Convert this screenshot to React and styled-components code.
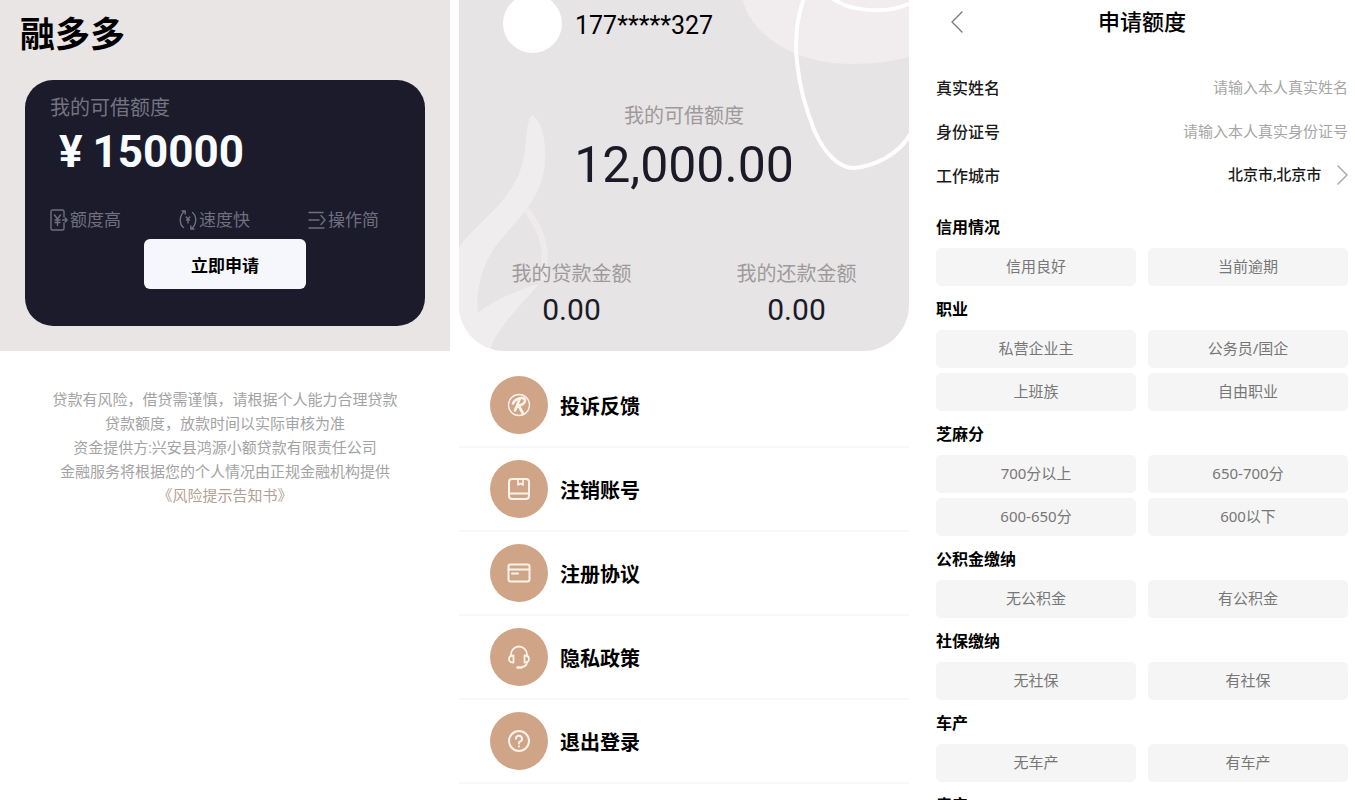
import React, { useState } from 'react';
import styled, { createGlobalStyle } from 'styled-components';

const GlobalStyle = createGlobalStyle`
  * {
    box-sizing: border-box;
  }

  body {
    margin: 0;
    background: #fff;
    color: #000;
    font-family: Roboto, 'Noto Sans CJK SC', sans-serif;
  }

  button, input, select {
    font-family: inherit;
  }
`;

const Screens = styled.div`
  display: grid;
  grid-template-columns: 450fr 450fr 437fr;
  gap: 9px;
  height: 100vh;
`;

const Screen = styled.section`
  min-width: 0;
  overflow-y: auto;
  scrollbar-width: none;
`;

/* home */

const HomeHero = styled.div`
  background: #e9e5e5;
  padding: 10px 25px 25px;
`;

const Brand = styled.h1`
  margin: 0 0 18px -5px;
  font-size: 35px;
  line-height: 52px;
  font-weight: 700;
`;

const QuotaCard = styled.div`
  display: flex;
  flex-direction: column;
  background: #1b1b2b;
  border-radius: 28px;
  padding: 15px 25px 37px;
`;

const QuotaLabel = styled.span`
  font-size: 20px;
  line-height: 26px;
  color: #747380;
`;

const QuotaAmount = styled.strong`
  display: flex;
  gap: 10px;
  padding-left: 9px;
  font-size: 44px;
  line-height: 62px;
  color: #f8fbff;
`;

const Features = styled.ul`
  display: grid;
  grid-template-columns: repeat(3, 129px);
  margin: 24px 0 6px;
  padding: 0;
  list-style: none;
`;

const Feature = styled.li`
  display: flex;
  align-items: center;
  gap: 2px;
  font-size: 17px;
  line-height: 26px;
  color: #706f7d;
`;

const ApplyButton = styled.button`
  align-self: center;
  width: 162px;
  height: 50px;
  border: none;
  border-radius: 6px;
  background: #f5f7fc;
  color: #000;
  font-size: 17px;
  font-weight: 700;
  cursor: pointer;
`;

const Notice = styled.div`
  padding-top: 37px;
  text-align: center;
  font-size: 15px;
  line-height: 24px;
  color: #a3a3a3;

  p {
    margin: 0;
  }
`;

const NoticeLink = styled.a`
  color: #b59f92;
  text-decoration: none;
`;

/* profile */

const ProfileHero = styled.div`
  position: relative;
  overflow: hidden;
  height: 351px;
  background: #e7e4e5;
  border-radius: 0 0 46px 46px;
`;

const HeroArt = styled.svg`
  position: absolute;
  inset: 0;
  width: 100%;
  height: 100%;
`;

const HeroBody = styled.div`
  position: relative;
  text-align: center;
`;

const UserRow = styled.div`
  display: flex;
  align-items: center;
  gap: 13px;
  height: 46px;
  padding-left: 44px;
  font-size: 25px;
`;

const Avatar = styled.div`
  flex: none;
  width: 59px;
  height: 59px;
  border-radius: 50%;
  background: #fff;
`;

const Phone = styled.span`
  padding-top: 5px;
`;

const Caption = styled.div`
  font-size: 20px;
  line-height: 30px;
  color: #9e9a9b;
`;

const Balance = styled.div`
  padding-top: 55px;
`;

const BalanceValue = styled.div`
  font-size: 50px;
  line-height: 68px;
  color: #1b1b27;
`;

const Stats = styled.div`
  display: grid;
  grid-template-columns: 1fr 1fr;
  padding-top: 60px;
`;

const StatValue = styled.div`
  font-size: 30px;
  line-height: 42px;
  color: #1b1b27;
`;

const Menu = styled.nav`
  padding-top: 13px;
`;

const MenuItem = styled.a`
  display: flex;
  align-items: center;
  gap: 12px;
  height: 84px;
  padding-left: 31px;
  border-bottom: 2px solid #f8f8f8;
  color: #000;
  font-size: 20px;
  font-weight: 700;
  text-decoration: none;
`;

const MenuIcon = styled.span`
  display: flex;
  align-items: center;
  justify-content: center;
  width: 58px;
  height: 58px;
  border-radius: 50%;
  background: #cfa487;
  color: #fdf3ea;
`;

/* application form */

const Form = styled.form`
  padding: 0 7px 0 18px;
`;

const FormHeader = styled.header`
  display: grid;
  grid-template-columns: 44px 1fr 44px;
  align-items: center;
  height: 44px;
  margin-bottom: 21px;
`;

const BackButton = styled.button`
  display: flex;
  padding: 0 0 0 14px;
  border: none;
  background: none;
  color: #777;
  cursor: pointer;
`;

const FormTitle = styled.h2`
  margin: 0;
  padding-top: 2px;
  font-size: 22px;
  line-height: 32px;
  font-weight: 500;
  text-align: center;
`;

const Field = styled.label`
  display: flex;
  align-items: center;
  justify-content: space-between;
  height: 44px;
  font-size: 16px;
  font-weight: 500;
  color: #1a1a1a;
`;

const FieldInput = styled.input`
  flex: 1;
  min-width: 0;
  padding: 2px 0 0;
  border: none;
  outline: none;
  background: none;
  font-size: 15px;
  text-align: right;

  &::placeholder {
    color: #a6a6a6;
  }
`;

const CityPicker = styled.span`
  display: flex;
  align-items: center;
  gap: 15px;
  color: #a9aab5;
`;

const CitySelect = styled.select`
  appearance: none;
  padding: 0;
  border: none;
  outline: none;
  background: none;
  color: #1a1a1a;
  font-size: 15px;
  font-weight: 500;
`;

const Group = styled.fieldset`
  min-width: 0;
  margin: 0 0 11px;
  padding: 0;
  border: none;
`;

const GroupTitle = styled.legend`
  margin-bottom: 8px;
  padding: 0;
  font-size: 16px;
  line-height: 25px;
  font-weight: 700;
`;

const Options = styled.div`
  display: grid;
  grid-template-columns: 1fr 1fr;
  gap: 5px 12px;
`;

const Option = styled.button`
  height: 38px;
  padding: 0 0 4px;
  border: none;
  border-radius: 5px;
  background: ${(props) => (props.$active ? '#ecdccf' : '#f5f5f5')};
  color: #777;
  font-family: 'Noto Sans', 'Noto Sans CJK SC', sans-serif;
  font-size: 15px;
  cursor: pointer;
`;

const Groups = styled.div`
  padding-top: 18px;
`;

const LineIcon = ({ width, height, stroke = 2, children }) => (
  <svg
    width={width}
    height={height}
    viewBox={`0 0 ${width} ${height}`}
    fill="none"
    stroke="currentColor"
    strokeWidth={stroke}
    strokeLinecap="round"
    strokeLinejoin="round"
    aria-hidden="true"
  >
    {children}
  </svg>
);

const features = [
  {
    text: '额度高',
    icon: (
      <LineIcon width={18} height={22} stroke={1.4}>
        <path d="M14 8V2.500Q14 1 12.500 1H2.500Q1 1 1 2.500V19.500Q1 21 2.500 21H12.500Q14 21 14 19.500V14" />
        <path d="M4.500 6L7.500 10L10.500 6M7.500 10V16.500M5 11H10M5 13.500H10M12.500 11H17M15.200 9L17.200 11L15.200 13" />
      </LineIcon>
    ),
  },
  {
    text: '速度快',
    icon: (
      <LineIcon width={18} height={22} stroke={1.4}>
        <path d="M6 2C0 6 0 15 4.500 18.500M3 2H6.200V5M12 20C18 16 18 7 13.500 3.500M15 20H11.800V17" />
        <path d="M7.200 8L9 10L10.800 8M9 10V14M7.500 11H10.500" />
      </LineIcon>
    ),
  },
  {
    text: '操作简',
    icon: (
      <LineIcon width={18} height={22} stroke={1.4}>
        <path d="M1 3.500H15M1 11H11M1 19H16M13 6.500L17 11L13 15.500" />
      </LineIcon>
    ),
  },
];

const menu = [
  {
    text: '投诉反馈',
    icon: (
      <LineIcon width={24} height={24} stroke={1.3}>
        <circle cx="12" cy="12" r="10.500" />
        <path strokeWidth="2.600" d="M12.500 6.500L8 17.500M6 10.500C8 5 18 3 18 7.500C18 10.500 14 12.500 11.500 12.500L16 20.500" />
      </LineIcon>
    ),
  },
  {
    text: '注销账号',
    icon: (
      <LineIcon width={24} height={24}>
        <rect x="2" y="2" width="20" height="20" rx="3" />
        <path d="M2 16.500H22" />
        <path strokeWidth="1.600" d="M11 2V8L13.500 6.500L16 8V2" />
      </LineIcon>
    ),
  },
  {
    text: '注册协议',
    icon: (
      <LineIcon width={24} height={24}>
        <rect x="1.500" y="3.500" width="21" height="17" rx="2" />
        <path d="M1.500 8.500H22.500M5 12.500H11" />
      </LineIcon>
    ),
  },
  {
    text: '隐私政策',
    icon: (
      <LineIcon width={24} height={24} stroke={1.800}>
        <path d="M4 11V9.500A8 8 0 0 1 20 9.500V11M20 17C20 20 18 21.500 15 22" />
        <path d="M6.500 10.500V17.500C3.500 17.500 2 16 2 14S3.500 10.500 6.500 10.500ZM17.500 10.500V17.500C20.500 17.500 22 16 22 14S20.500 10.500 17.500 10.500Z" />
        <path strokeWidth="2.500" d="M10.500 22.500H14.500" />
      </LineIcon>
    ),
  },
  {
    text: '退出登录',
    icon: (
      <LineIcon width={24} height={24}>
        <circle cx="12" cy="12" r="10" />
        <path d="M9 9.800A3 3 0 1 1 13 12.500Q12 13 12 14.500M12 17.300V17.500" />
      </LineIcon>
    ),
  },
];

const groups = [
  { title: '信用情况', options: ['信用良好', '当前逾期'] },
  { title: '职业', options: ['私营企业主', '公务员/国企', '上班族', '自由职业'] },
  { title: '芝麻分', options: ['700分以上', '650-700分', '600-650分', '600以下'] },
  { title: '公积金缴纳', options: ['无公积金', '有公积金'] },
  { title: '社保缴纳', options: ['无社保', '有社保'] },
  { title: '车产', options: ['无车产', '有车产'] },
  { title: '房产', options: ['无房产', '有房产'] },
];

const Home = () => (
  <Screen>
    <HomeHero>
      <Brand>融多多</Brand>
      <QuotaCard>
        <QuotaLabel>我的可借额度</QuotaLabel>
        <QuotaAmount>
          <span>¥</span>
          <span>150000</span>
        </QuotaAmount>
        <Features>
          {features.map((item) => (
            <Feature key={item.text}>
              {item.icon}
              {item.text}
            </Feature>
          ))}
        </Features>
        <ApplyButton type="button">立即申请</ApplyButton>
      </QuotaCard>
    </HomeHero>
    <Notice>
      <p>贷款有风险，借贷需谨慎，请根据个人能力合理贷款</p>
      <p>贷款额度，放款时间以实际审核为准</p>
      <p>资金提供方:兴安县鸿源小额贷款有限责任公司</p>
      <p>金融服务将根据您的个人情况由正规金融机构提供</p>
      <NoticeLink href="#risk">《风险提示告知书》</NoticeLink>
    </Notice>
  </Screen>
);

const Profile = () => (
  <Screen>
    <ProfileHero>
      <HeroArt viewBox="0 0 450 351" preserveAspectRatio="none" aria-hidden="true">
        <path fill="#f1edee" d="M284 0C290 30 330 64 392 64C415 64 435 61 450 57V0Z" />
        <path
          fill="#f0edee"
          d="M73 115C65 124 69 150 62 168C51 203 18 222 0 247V351H31C36 330 62 305 80 284C60 290 38 298 19 313C16 290 24 262 39 243C54 225 76 205 84 176C89 155 86 122 73 115Z"
        />
        <path fill="none" stroke="#efebed" strokeWidth="6" d="M67 210C81 226 91 250 83 280" />
        <g fill="none" stroke="#fff" strokeWidth="4">
          <path d="M345 -2C330 38 338 88 356 132C366 154 380 168 395 168C415 166 440 155 452 133" />
          <path d="M373 -2C388 10 425 16 452 3" />
        </g>
      </HeroArt>
      <HeroBody>
        <UserRow>
          <Avatar />
          <Phone>177*****327</Phone>
        </UserRow>
        <Balance>
          <Caption>我的可借额度</Caption>
          <BalanceValue>12,000.00</BalanceValue>
        </Balance>
        <Stats>
          <div>
            <Caption>我的贷款金额</Caption>
            <StatValue>0.00</StatValue>
          </div>
          <div>
            <Caption>我的还款金额</Caption>
            <StatValue>0.00</StatValue>
          </div>
        </Stats>
      </HeroBody>
    </ProfileHero>
    <Menu>
      {menu.map((item) => (
        <MenuItem key={item.text} href="#menu">
          <MenuIcon>{item.icon}</MenuIcon>
          {item.text}
        </MenuItem>
      ))}
    </Menu>
  </Screen>
);

const Apply = () => {
  const [selected, setSelected] = useState({});

  return (
    <Screen>
      <Form>
        <FormHeader>
          <BackButton type="button" aria-label="返回">
            <LineIcon width={14} height={24} stroke={1.3}>
              <path d="M12 2L2 12L12 22" />
            </LineIcon>
          </BackButton>
          <FormTitle>申请额度</FormTitle>
        </FormHeader>
        <Field>
          真实姓名
          <FieldInput type="text" placeholder="请输入本人真实姓名" />
        </Field>
        <Field>
          身份证号
          <FieldInput type="text" placeholder="请输入本人真实身份证号" />
        </Field>
        <Field>
          工作城市
          <CityPicker>
            <CitySelect>
              <option>北京市,北京市</option>
            </CitySelect>
            <LineIcon width={11} height={20} stroke={1.5}>
              <path d="M1 1L10 10L1 19" />
            </LineIcon>
          </CityPicker>
        </Field>
        <Groups>
          {groups.map((group) => (
            <Group key={group.title}>
              <GroupTitle>{group.title}</GroupTitle>
              <Options>
                {group.options.map((option) => (
                  <Option
                    key={option}
                    type="button"
                    $active={selected[group.title] === option}
                    onClick={() => setSelected({ ...selected, [group.title]: option })}
                  >
                    {option}
                  </Option>
                ))}
              </Options>
            </Group>
          ))}
        </Groups>
      </Form>
    </Screen>
  );
};

const App = () => (
  <>
    <GlobalStyle />
    <Screens>
      <Home />
      <Profile />
      <Apply />
    </Screens>
  </>
);

export default App;
